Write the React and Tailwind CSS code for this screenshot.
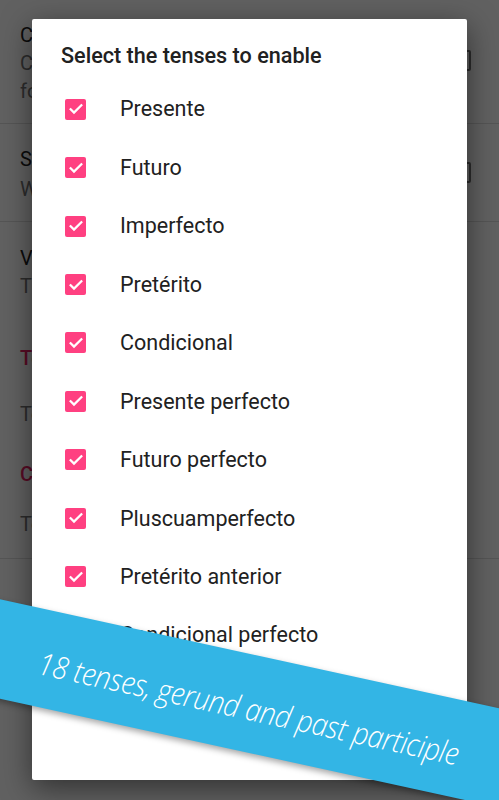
import React from "react";

const tenses = [
  "Presente",
  "Futuro",
  "Imperfecto",
  "Pretérito",
  "Condicional",
  "Presente perfecto",
  "Futuro perfecto",
  "Pluscuamperfecto",
  "Pretérito anterior",
  "Condicional perfecto",
];

function Check() {
  return (
    <div className="w-[21px] h-[21px] rounded-[2px] bg-[#ff4081] flex items-center justify-center shrink-0">
      <svg width="16" height="16" viewBox="0 0 24 24" fill="none">
        <path d="M4 12.5l5 5L20 6.5" stroke="white" strokeWidth="3.4" strokeLinecap="square" />
      </svg>
    </div>
  );
}

function BgBox() {
  return <div className="w-[21px] h-[21px] rounded-[2px] border-2 border-[#757575] shrink-0" />;
}

export default function App() {
  return (
    <div
      className="relative w-[499px] h-[800px] overflow-hidden bg-white"
      style={{ fontFamily: "Roboto, 'Noto Sans', sans-serif" }}
    >
      {/* underlying settings screen */}
      <div className="flex flex-col text-[20px]">
        <div className="h-[123px] flex items-start pl-[20px] pr-[28px] pt-[21px]">
          <div className="flex-1">
            <div className="leading-[28px] text-[#212121]">Conjugation display</div>
            <div className="leading-[28px] text-[#757575]">Conjugate verbs with pronouns</div>
            <div className="leading-[28px] text-[#757575]">for every person</div>
          </div>
          <div className="pt-[29px]"><BgBox /></div>
        </div>
        <div className="h-px bg-[#e0e0e0]" />
        <div className="h-[97px] flex items-start pl-[20px] pr-[28px] pt-[21px]">
          <div className="flex-1">
            <div className="leading-[28px] text-[#212121]">Show vosotros</div>
            <div className="leading-[28px] text-[#757575] pt-[2px]">When disabled, it is hidden</div>
          </div>
          <div className="pt-[17px]"><BgBox /></div>
        </div>
        <div className="h-px bg-[#e0e0e0]" />
        <div className="h-[100px] pl-[20px] pt-[22px]">
          <div className="leading-[28px] text-[#212121]">Verb list</div>
          <div className="leading-[28px] text-[#757575]">The main list</div>
        </div>
        <div className="pl-[20px] h-[50px] pt-[22px] leading-[28px] font-medium text-[#e91e63]">Tenses</div>
        <div className="pl-[20px] h-[68px] pt-[28px] leading-[28px] text-[#757575]">Tenses</div>
        <div className="pl-[20px] h-[50px] pt-[20px] leading-[28px] font-medium text-[#e91e63]">Conjugation</div>
        <div className="pl-[20px] h-[68px] pt-[20px] leading-[28px] text-[#757575]">Text size</div>
        <div className="h-px bg-[#e0e0e0]" />
      </div>

      {/* scrim */}
      <div className="absolute inset-0 bg-black/[0.62]" />

      {/* dialog */}
      <div className="absolute left-[32px] top-[19px] w-[435px] h-[761px] bg-white rounded-[2px] shadow-[0_8px_30px_rgba(0,0,0,0.5)] flex flex-col overflow-hidden">
        <div className="pl-[29px] pt-[25px] pb-[11px] text-[21.6px] leading-[24px] font-medium text-[#212121]">
          Select the tenses to enable
        </div>
        <div className="flex flex-col pt-[1px]">
          {tenses.map((t) => (
            <div key={t} className="h-[58.45px] shrink-0 flex items-center pl-[33px] gap-[34px]">
              <Check />
              <span className="text-[21.5px] text-[#212121] leading-none">{t}</span>
            </div>
          ))}
        </div>
      </div>

      {/* ribbon */}
      <div className="absolute left-[-110px] top-[654.5px] w-[720px] h-[97px] rotate-[12.3deg] bg-[#33b5e5] shadow-[0_3px_6px_rgba(0,0,0,0.35)] flex items-center justify-center">
        <span
          className="text-white italic font-light text-[31px] tracking-[-0.5px] whitespace-nowrap pt-[10px] scale-x-[0.9] inline-block"
          style={{ fontFamily: "'Open Sans', 'Noto Sans', sans-serif" }}
        >
          18 tenses, gerund and past participle
        </span>
      </div>
    </div>
  );
}
